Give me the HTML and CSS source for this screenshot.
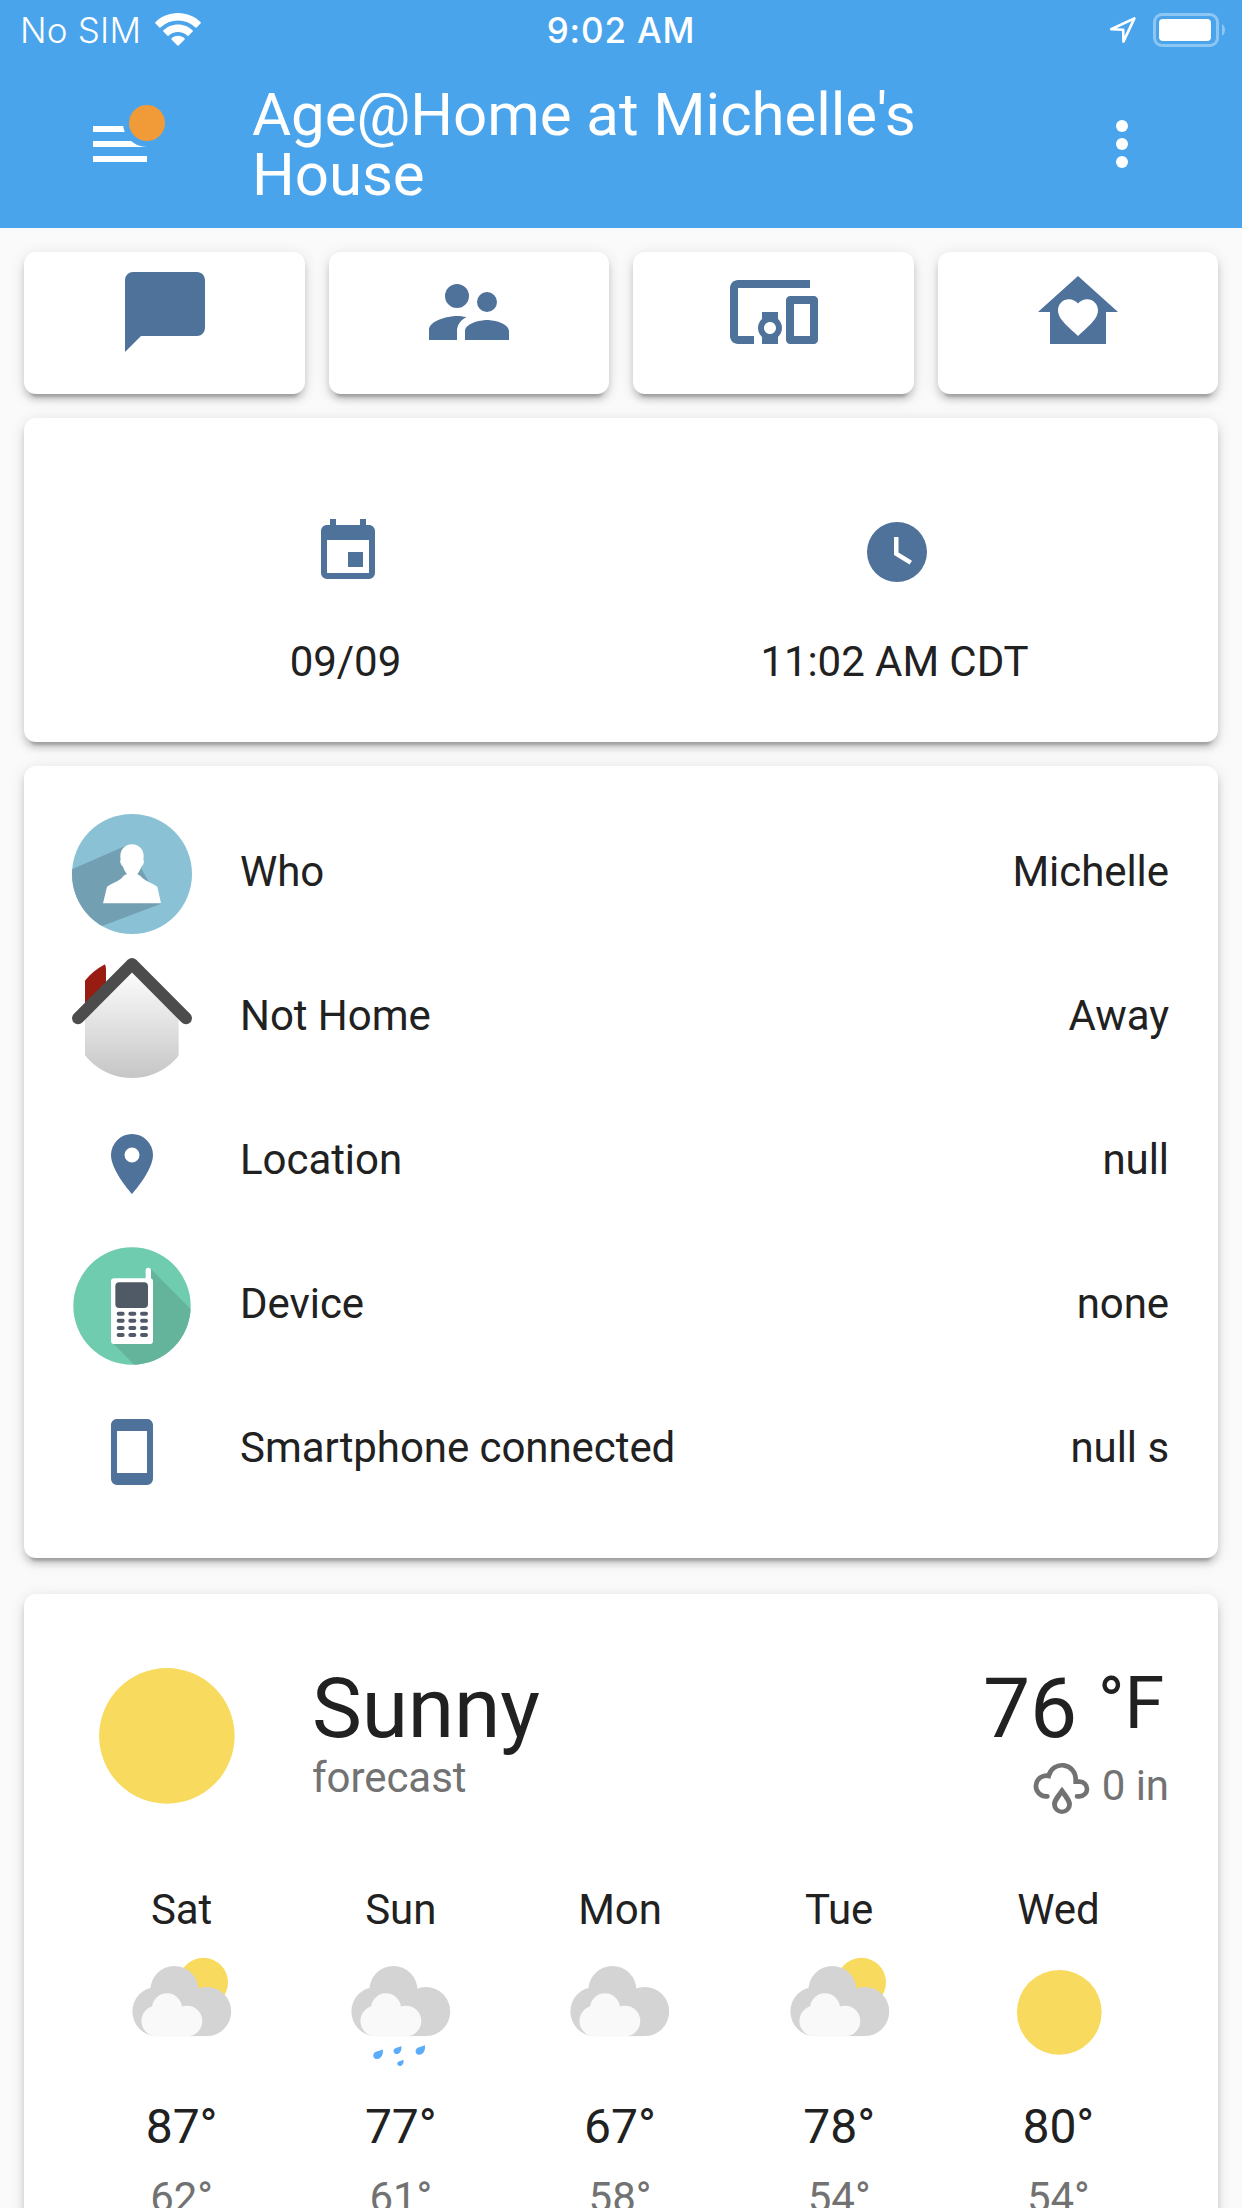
FILE: index.html
```html
<!DOCTYPE html>
<html lang="en">
<head>
<meta charset="utf-8">
<title>Age@Home at Michelle's House</title>
<link rel="stylesheet" href="styles.css">
</head>
<body>
<svg class="defs" aria-hidden="true">
  <defs>
    <linearGradient id="wall" x1="0" y1="0" x2="0" y2="1">
      <stop offset="0" stop-color="#ffffff"/>
      <stop offset="1" stop-color="#c6c6c6"/>
    </linearGradient>
    <clipPath id="round"><circle cx="180" cy="180" r="180"/></clipPath>
    <clipPath id="round-small"><circle cx="180" cy="180" r="176"/></clipPath>
    <symbol id="clouds" viewBox="0 0 120 120">
      <g fill="#d4d4d4">
        <circle cx="51.4" cy="37" r="24"/>
        <circle cx="83.6" cy="58.5" r="24.6"/>
        <circle cx="34" cy="58.5" r="24.6"/>
        <rect x="34" y="36" width="49.6" height="47.1"/>
      </g>
      <g fill="#f9f9f9">
        <circle cx="44" cy="55.3" r="15"/>
        <circle cx="64" cy="68" r="15.3"/>
        <circle cx="33.7" cy="68" r="15.3"/>
        <rect x="33.7" y="55" width="30.3" height="28.3"/>
      </g>
    </symbol>
    <symbol id="partly" viewBox="0 0 120 120">
      <circle cx="80.4" cy="29.4" r="24.6" fill="#f7da5e"/>
      <use href="#clouds" width="120" height="120"/>
    </symbol>
  </defs>
</svg>

<header class="header">
  <div class="status">
    <div class="status-left">
      <span class="carrier">No SIM</span>
      <svg class="wifi" viewBox="0 0 46 33" fill="#fff">
        <path d="M23 0C32 0 40 3.500 45.700 9.200a.8.8 0 0 1 0 1.100L41.600 14.400a.8.8 0 0 1-1.100 0A25.500 25.500 0 0 0 5.500 14.400a.8.8 0 0 1-1.100 0L.3 10.300a.8.8 0 0 1 0-1.100C6 3.500 14 0 23 0z"/>
        <path d="M23 11.500c5.800 0 11 2.300 14.700 6a.8.8 0 0 1 0 1.100l-4.200 4.100a.8.8 0 0 1-1.100 0 13.600 13.600 0 0 0-18.800 0 .8.8 0 0 1-1.100 0l-4.200-4.100a.8.8 0 0 1 0-1.100c3.700-3.700 8.900-6 14.700-6z"/>
        <path d="M23 22.800c2.600 0 4.900 1 6.600 2.700a.8.8 0 0 1 0 1.100l-6 5.900a.8.8 0 0 1-1.100 0l-6-5.900a.8.8 0 0 1 0-1.100c1.600-1.700 3.900-2.700 6.500-2.700z"/>
      </svg>
    </div>
    <span class="clock">9:02 AM</span>
    <div class="status-right">
      <svg class="arrow" viewBox="0 0 28 28" fill="none" stroke="#fff" stroke-width="2.600" stroke-linejoin="round"><path d="M25.400 2.400 2.200 13.200 14.200 13.800 14.400 25.600z"/></svg>
      <svg class="battery" viewBox="0 0 74 34">
        <rect x="1.500" y="1.500" width="63" height="31" rx="7.500" fill="none" stroke="#8cc6f3" stroke-width="3"/>
        <rect x="6" y="6" width="52" height="22" rx="4" fill="#fff"/>
        <path d="M69 11a7.500 7.500 0 0 1 0 12z" fill="#8cc6f3"/>
      </svg>
    </div>
  </div>
  <div class="toolbar">
    <svg class="menu" viewBox="0 0 26 24"><path fill="#fff" d="M3 6h18v2H3zM3 11h18v2H3zM3 16h18v2H3z"/><circle cx="21" cy="5" r="8" fill="#4aa4ec"/><circle cx="21" cy="5" r="6" fill="#f09b37"/></svg>
    <h1 class="title">Age@Home at Michelle's House</h1>
    <svg class="more" viewBox="0 0 24 24" fill="#fff"><circle cx="12" cy="6" r="2"/><circle cx="12" cy="12" r="2"/><circle cx="12" cy="18" r="2"/></svg>
  </div>
</header>

<main class="view">
  <nav class="shortcuts">
    <a class="card shortcut"><svg viewBox="0 0 24 24"><path d="M20,2H4A2,2 0 0,0 2,4V22L6,18H20A2,2 0 0,0 22,16V4C22,2.890 21.100,2 20,2Z"/></svg></a>
    <a class="card shortcut"><svg viewBox="0 0 24 24"><path d="M16.500,12A2.500,2.500 0 0,0 19,9.500A2.500,2.500 0 0,0 16.500,7A2.500,2.500 0 0,0 14,9.500A2.500,2.500 0 0,0 16.500,12M9,11A3,3 0 0,0 12,8A3,3 0 0,0 9,5A3,3 0 0,0 6,8A3,3 0 0,0 9,11M16.500,14C14.670,14 11,14.920 11,16.750V19H22V16.750C22,14.920 18.330,14 16.500,14M9,13C6.670,13 2,14.170 2,16.500V19H9V16.750C9,15.900 9.330,14.410 11.370,13.280C10.500,13.100 9.660,13 9,13Z"/></svg></a>
    <a class="card shortcut"><svg viewBox="0 0 24 24"><path d="M3 6h18V4H3c-1.100 0-2 .9-2 2v12c0 1.100.9 2 2 2h4v-2H3V6zm10 6H9v1.780c-.61.55-1 1.330-1 2.220s.39 1.670 1 2.220V20h4v-1.780c.61-.55 1-1.340 1-2.220s-.39-1.670-1-2.220V12zm-2 5.500c-.83 0-1.500-.67-1.500-1.500s.67-1.500 1.500-1.500 1.500.67 1.500 1.500-.67 1.500-1.500 1.500zM22 8h-6c-.5 0-1 .5-1 1v10c0 .5.5 1 1 1h6c.5 0 1-.5 1-1V9c0-.5-.5-1-1-1zm-1 10h-4v-8h4v8z"/></svg></a>
    <a class="card shortcut"><svg viewBox="0 0 24 24"><path fill-rule="evenodd" d="M12,3L2,12H5V20H19V12H22L12,3M12,18L11.280,17.340C8.700,15 7,13.460 7,11.570C7,10.030 8.210,8.820 9.750,8.820C10.620,8.820 11.450,9.230 12,9.870C12.550,9.230 13.380,8.820 14.250,8.820C15.790,8.820 17,10.030 17,11.570C17,13.460 15.300,15 12.720,17.340L12,18Z"/></svg></a>
  </nav>

  <section class="card glance">
    <div class="glance-item">
      <svg class="icon" viewBox="0 0 24 24"><path d="M19,19H5V8H19M16,1V3H8V1H6V3H5C3.890,3 3,3.890 3,5V19A2,2 0 0,0 5,21H19A2,2 0 0,0 21,19V5C21,3.890 20.100,3 19,3H18V1M17,12H12V17H17V12Z"/></svg>
      <span>09/09</span>
    </div>
    <div class="glance-item">
      <svg class="icon" viewBox="0 0 24 24"><path d="M12,2A10,10 0 0,0 2,12A10,10 0 0,0 12,22A10,10 0 0,0 22,12A10,10 0 0,0 12,2M16.200,16.200L11,13V7H12.500V12.200L17,14.900L16.200,16.200Z"/></svg>
      <span>11:02 AM CDT</span>
    </div>
  </section>

  <section class="card entities">
    <div class="row">
      <svg class="badge" viewBox="0 0 360 360">
        <g clip-path="url(#round)">
          <rect width="360" height="360" fill="#8ac1d5"/>
          <path d="M160 96 0 166V372L92 335 267 269 200 150z" fill="#729fb1"/>
          <path d="M180 91c22 0 36 17 35 38 0 4-1 6-1 10 3 0 2 6 0 12-2 4-5 5-5 6-4 10-8 18-13 24 8 2 11 8 18 13 14 10 28 14 42 24l11 50H93l12-50c14-10 28-14 42-24 7-5 7-11 18-13-5-6-9-14-13-24 0-1-4-2-5-6-3-8-4-12-1-12 0-4-1-6-1-10-1-21 13-38 35-38z" fill="#fff"/>
        </g>
      </svg>
      <span class="name">Who</span><span class="state">Michelle</span>
    </div>
    <div class="row">
      <svg class="badge" viewBox="0 0 360 360">
        <g clip-path="url(#round)">
          <path d="M39 160V0H92Q102 22 102 34V110z" fill="#991c12"/>
          <path d="M180 24 39 165V360H320V165z" fill="url(#wall)"/>
          <path d="M18 181 180 18 342 181" fill="none" stroke="#4c4c4c" stroke-width="36" stroke-linecap="round" stroke-linejoin="round"/>
        </g>
      </svg>
      <span class="name">Not Home</span><span class="state">Away</span>
    </div>
    <div class="row">
      <span class="badge"><svg class="icon" viewBox="0 0 24 24"><path d="M12,11.500A2.500,2.500 0 0,1 9.500,9A2.500,2.500 0 0,1 12,6.500A2.500,2.500 0 0,1 14.500,9A2.500,2.500 0 0,1 12,11.500M12,2A7,7 0 0,0 5,9C5,14.250 12,22 12,22C12,22 19,14.250 19,9A7,7 0 0,0 12,2Z"/></svg></span>
      <span class="name">Location</span><span class="state">null</span>
    </div>
    <div class="row">
      <svg class="badge" viewBox="0 0 360 360">
        <g clip-path="url(#round-small)">
          <rect width="360" height="360" fill="#70ccaf"/>
          <path d="M236 68 370 204V370H200L122 291z" fill="#64b39b"/>
        </g>
        <rect x="117" y="97" width="126" height="197" rx="10" fill="#fff"/>
        <rect x="221" y="65" width="16" height="50" rx="8" fill="#fff"/>
        <rect x="130" y="109" width="98" height="77" rx="12" fill="#505a66"/>
        <g stroke="#505a69" stroke-width="12" stroke-linecap="round">
          <path d="M140 203.500h12M175 203.500h12M210 203.500h12M140 224.500h12M175 224.500h12M210 224.500h12M140 246h12M175 246h12M210 246h12M140 267h12M175 267h12M210 267h12"/>
        </g>
      </svg>
      <span class="name">Device</span><span class="state">none</span>
    </div>
    <div class="row">
      <span class="badge"><svg class="icon" viewBox="0 0 24 24"><path d="M17,19H7V5H17M17,1H7C5.890,1 5,1.890 5,3V21A2,2 0 0,0 7,23H17A2,2 0 0,0 19,21V3C19,1.890 18.100,1 17,1Z"/></svg></span>
      <span class="name">Smartphone connected</span><span class="state">null s</span>
    </div>
  </section>

  <section class="card weather">
    <div class="current">
      <svg class="current-icon" viewBox="0 0 17 17"><circle cx="8.400" cy="8.400" r="6" fill="#f7da5e"/></svg>
      <div class="summary">
        <div class="condition">Sunny</div>
        <div class="caption">forecast</div>
      </div>
      <div class="reading">
        <div class="temp">76 <span class="unit">°F</span></div>
        <div class="precip">
          <svg class="rain" viewBox="0 0 180 180">
            <path d="M46 121A31 31 0 1 1 50 60A41 41 0 0 1 131 71V77H143A22 22 0 0 1 143 121H135" fill="none" stroke="#727272" stroke-width="14" stroke-linecap="round"/>
            <path fill="#727272" fill-rule="evenodd" d="M90 92C100 106 120 128 120 144A30 30 0 0 1 60 144C60 128 80 106 90 92zM90 118C84 128 75 138 75 146A15 15 0 0 0 105 146C105 138 96 128 90 118z"/>
          </svg>
          <span>0 in</span>
        </div>
      </div>
    </div>
    <div class="forecast">
      <div class="day"><span>Sat</span><svg viewBox="0 0 120 120"><use href="#partly"/></svg><span class="high">87°</span><span class="low">62°</span></div>
      <div class="day"><span>Sun</span><svg viewBox="0 0 120 120"><use href="#clouds"/>
        <g fill="#5cadf9">
          <path d="M40.600 96.300C42 101 39 106.100 35 106.100C31.500 106.100 30.400 102.500 32 100.300C33.800 97.800 37 98.800 40.600 96.300z"/>
          <path d="M59.200 93C60.300 97 58 101.100 54.700 101.100C51.700 101.100 50.900 98.200 52.100 96.300C53.600 94.200 56.300 95 59.200 93z"/>
          <path d="M82.700 92C84.100 96.700 81.100 101.800 77.300 101.800C73.800 101.800 72.800 98.200 74.300 96C76.100 93.500 79.200 94.500 82.700 92z"/>
          <path d="M61.400 106.700C62.300 109.800 60.600 113 57.900 113C55.400 113 54.800 110.800 55.700 109.300C56.900 107.700 59 108.300 61.400 106.700z"/>
        </g></svg><span class="high">77°</span><span class="low">61°</span></div>
      <div class="day"><span>Mon</span><svg viewBox="0 0 120 120"><use href="#clouds"/></svg><span class="high">67°</span><span class="low">58°</span></div>
      <div class="day"><span>Tue</span><svg viewBox="0 0 120 120"><use href="#partly"/></svg><span class="high">78°</span><span class="low">54°</span></div>
      <div class="day"><span>Wed</span><svg viewBox="0 0 17 17"><circle cx="8.400" cy="8.400" r="6" fill="#f7da5e"/></svg><span class="high">80°</span><span class="low">54°</span></div>
    </div>
  </section>
</main>
</body>
</html>
```
FILE: styles.css
```css
* { box-sizing: border-box; }

html, body { height: 2208px; overflow: hidden; }

body {
  margin: 0;
  background: #fafafa;
  color: #212121;
  font: 400 42px/60px Roboto, sans-serif;
  letter-spacing: -0.06px;
}

svg { display: block; flex: none; overflow: visible; }
.defs { width: 0; height: 0; float: left; }

.header { height: 228px; background: #4aa4ec; color: #fff; }

.status {
  height: 60px;
  display: grid;
  grid-template-columns: 1fr auto 1fr;
  align-items: center;
  padding: 0 15px;
  font: 400 35px/60px Inter, sans-serif;
}
.status-left, .status-right { display: flex; align-items: center; }
.status-left { padding-left: 5px; }
.status-right { justify-content: flex-end; gap: 16px; }
.carrier { font-weight: 300; width: 135px; letter-spacing: 0.2px; white-space: nowrap; }
.wifi { width: 46px; height: 33px; margin-bottom: 2px; }
.clock { font-weight: 500; letter-spacing: 0.8px; }
.arrow { width: 28px; height: 28px; }
.battery { width: 74px; height: 34px; }

.toolbar {
  height: 168px;
  display: flex;
  align-items: center;
  padding: 0 84px;
}
.menu { width: 78px; height: 72px; }
.title {
  margin: 0 auto 0 90px;
  padding-top: 2px;
  width: 740px;
  font: 400 60px/60px Roboto, sans-serif;
}
.more { width: 72px; height: 72px; }

.view {
  display: flex;
  flex-direction: column;
  gap: 24px;
  padding: 24px;
}

.card {
  background: #fff;
  border-radius: 12px;
  box-shadow: 0 6px 6px 0 rgba(0, 0, 0, 0.14), 0 3px 15px 0 rgba(0, 0, 0, 0.12), 0 9px 3px -6px rgba(0, 0, 0, 0.2);
}

.shortcuts { display: grid; grid-template-columns: repeat(4, 1fr); gap: 24px; }
.shortcut { height: 142px; display: flex; justify-content: center; padding: 12px 0 0 1px; }
.shortcut svg { width: 96px; height: 96px; fill: #4f729b; }

.icon { width: 72px; height: 72px; fill: #4f729b; }

.glance { height: 324px; display: flex; padding: 98px 49px 0 47px; }
.glance-item { flex: 1; display: flex; flex-direction: column; align-items: center; gap: 44px; }
.glance-item .icon { margin-left: 5px; }

.entities { display: flex; flex-direction: column; gap: 24px; padding: 48px; }
.row { height: 120px; display: flex; align-items: center; }
.badge { width: 120px; height: 120px; display: flex; align-items: center; justify-content: center; padding-top: 4px; }
svg.badge { display: block; padding: 0; }
.name { margin-left: 48px; padding-bottom: 5px; }
.state { margin-left: auto; padding: 0 1px 5px 0; }

.weather { margin-top: 12px; height: 700px; padding: 47px 48px 0; }
.current { display: flex; height: 192px; }
.current-icon { width: 192px; height: 192px; }
.summary { margin-left: 48px; padding-top: 24px; }
.condition, .temp { font-size: 84px; line-height: 87px; letter-spacing: -0.2px; }
.caption { padding-top: 1px; line-height: 50px; color: #727272; }
.reading { margin-left: auto; padding-top: 24px; display: flex; flex-direction: column; align-items: flex-end; }
.temp { display: flex; align-items: flex-start; white-space: pre; padding-right: 6px; }
.unit { font-size: 72px; line-height: 77px; }
.precip { margin-top: 4px; display: flex; gap: 10px; padding-right: 1px; color: #727272; }
.rain { width: 60px; height: 60px; }

.forecast { display: grid; grid-template-columns: repeat(5, 219.2px); margin-top: 47px; }
.day { display: flex; flex-direction: column; align-items: center; }
.day svg { width: 120px; height: 120px; margin: 13px 0 24px 3px; }
.high { font-size: 48px; }
.low { margin-top: 11px; color: #727272; }
```
